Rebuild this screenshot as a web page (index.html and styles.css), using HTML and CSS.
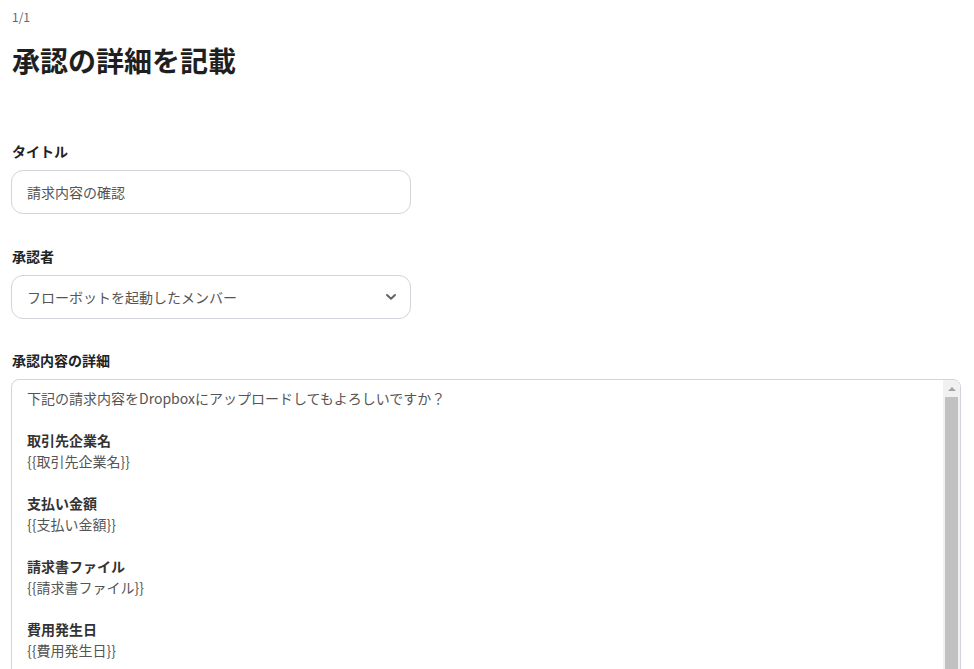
FILE: index.html
```html
<!DOCTYPE html>
<html lang="ja">
<head>
<meta charset="utf-8">
<title>承認の詳細を記載</title>
<link rel="stylesheet" href="styles.css">
</head>
<body>
<div class="page">
  <div class="step">1/1</div>
  <h1 class="title">承認の詳細を記載</h1>

  <div class="field field-first">
    <div class="label">タイトル</div>
    <div class="input">請求内容の確認</div>
  </div>

  <div class="field">
    <div class="label">承認者</div>
    <div class="input select">
      <span>フローボットを起動したメンバー</span>
      <svg class="chev" width="12" height="8" viewBox="0 0 12 8"><path d="M2 2 L6 5.8 L10 2" fill="none" stroke="#666" stroke-width="2" stroke-linecap="round" stroke-linejoin="round"/></svg>
    </div>
  </div>

  <div class="field">
    <div class="label">承認内容の詳細</div>
    <div class="textarea">
      <div class="ta-content">
        <p>下記の請求内容をDropboxにアップロードしてもよろしいですか？</p>
        <p class="blank">&nbsp;</p>
        <p class="b">取引先企業名</p>
        <p>{{取引先企業名}}</p>
        <p class="blank">&nbsp;</p>
        <p class="b">支払い金額</p>
        <p>{{支払い金額}}</p>
        <p class="blank">&nbsp;</p>
        <p class="b">請求書ファイル</p>
        <p>{{請求書ファイル}}</p>
        <p class="blank">&nbsp;</p>
        <p class="b">費用発生日</p>
        <p>{{費用発生日}}</p>
      </div>
      <div class="sbar">
        <div class="sbar-btn"><span class="tri"></span></div>
        <div class="sbar-thumb"></div>
      </div>
    </div>
  </div>
</div>
</body>
</html>
```
FILE: styles.css
```css
html, body {
  margin: 0;
  padding: 0;
  background: #fff;
  overflow: hidden;
}
body {
  font-family: "Noto Sans CJK JP", "Noto Sans", sans-serif;
  color: #222;
}
.page {
  padding: 8px 13px 0 11px;
}
.step {
  font-size: 12px;
  line-height: 18px;
  color: #666;
  padding-left: 1px;
}
.title {
  margin: 16px 0 0 0;
  font-size: 28px;
  line-height: 36px;
  font-weight: 700;
  color: #1f1f1f;
  padding-left: 1px;
}
.field {
  margin-top: 32px;
}
.field-first {
  margin-top: 64px;
}
.label {
  font-size: 14px;
  line-height: 19px;
  font-weight: 700;
  color: #222;
  padding-left: 1px;
  margin-bottom: 9px;
}
.input {
  box-sizing: border-box;
  width: 400px;
  height: 44px;
  border: 1px solid #d3d3db;
  border-radius: 12px;
  padding: 0 15px;
  display: flex;
  align-items: center;
  font-size: 14px;
  color: #555;
}
.field-first + .field {
  margin-top: 33px;
}
.select {
  justify-content: space-between;
  padding-right: 13px;
}
.chev {
  display: block;
}
.textarea {
  box-sizing: border-box;
  width: 950px;
  height: 310px;
  border: 1px solid #d3d3db;
  border-radius: 8px;
  display: flex;
  overflow: hidden;
}
.ta-content {
  flex: 1;
  padding: 8px 15px;
  font-size: 14px;
  line-height: 21px;
  color: #555;
}
.ta-content p {
  margin: 0;
}
.ta-content .b {
  font-weight: 700;
  color: #333;
}
.sbar {
  width: 17px;
  background: #f1f1f1;
  display: flex;
  flex-direction: column;
  align-items: center;
}
.sbar-btn {
  width: 17px;
  height: 17px;
  display: flex;
  align-items: center;
  justify-content: center;
}
.tri {
  width: 0;
  height: 0;
  border-left: 4px solid transparent;
  border-right: 4px solid transparent;
  border-bottom: 4px solid #a3a3a3;
}
.sbar-thumb {
  width: 13px;
  flex: 1;
  background: #c1c1c1;
}
```
